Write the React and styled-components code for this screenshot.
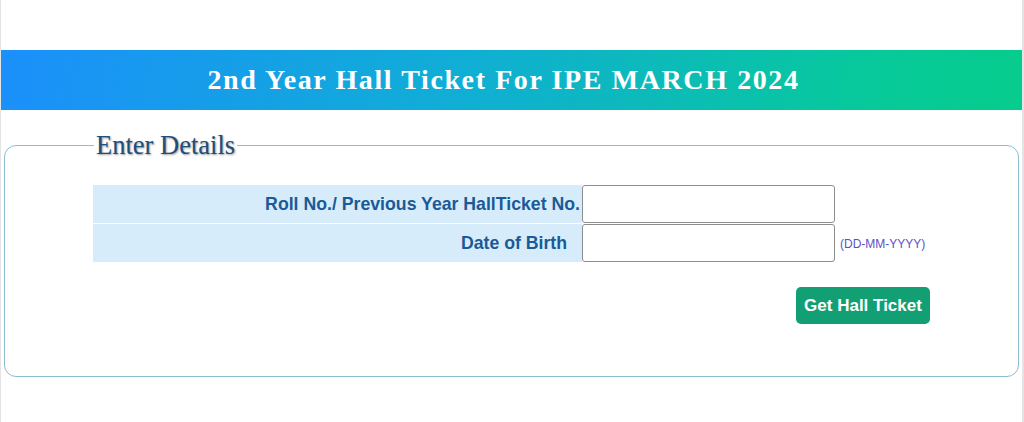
import React from "react";
import styled, { createGlobalStyle } from "styled-components";

const GlobalStyle = createGlobalStyle`
  body {
    margin: 0;
    background: #ffffff;
    font-family: "Liberation Sans", Arial, sans-serif;
  }
`;

const Page = styled.div`
  box-sizing: border-box;
  width: 1024px;
  min-height: 422px;
  padding-top: 50px;
  border-left: 1px solid #e4e4e4;
  border-right: 2px solid #e4e4e4;
`;

const Banner = styled.div`
  height: 60px;
  display: flex;
  align-items: center;
  justify-content: center;
  background: linear-gradient(100deg, #1b8ffb 0%, #10aed5 45%, #07c99a 85%, #06cc8c 100%);

  h1 {
    margin: 0;
    color: #ffffff;
    font-family: "Liberation Serif", "Times New Roman", serif;
    font-size: 28px;
    font-weight: bold;
    letter-spacing: 1.6px;
    transform: translateX(-8px);
  }
`;

const Fieldset = styled.fieldset`
  margin: 20px 3px 0 3px;
  padding: 25px 0 52px 0;
  border: 1px solid #8ebdd0;
  border-radius: 12px;

  legend {
    margin-left: 89px;
    padding: 0 2px;
    color: #1d4f7c;
    font-family: "Liberation Serif", "Times New Roman", serif;
    font-size: 26.5px;
    line-height: 30px;
    text-shadow: 1px 1px 2px #9a9a9a;
  }
`;

const FormTable = styled.div`
  width: 837px;
  margin: 0 auto;
  display: grid;
  grid-template-columns: 489px 253px 1fr;
  grid-template-rows: 38px 38px;
  row-gap: 1px;
`;

const Label = styled.div`
  display: flex;
  align-items: center;
  justify-content: flex-end;
  padding-right: ${(p) => p.$pad || 2}px;
  background: #d6ecfa;
  color: #1b5a98;
  font-size: 17.7px;
  font-weight: bold;
`;

const Input = styled.input`
  box-sizing: border-box;
  width: 253px;
  height: 38px;
  margin: 0;
  border: 1px solid #8d8d8d;
  border-radius: 3px;
  background: #fff;
`;

const Hint = styled.div`
  display: flex;
  align-items: center;
  padding-left: 5px;
  padding-top: 2px;
  color: #5b4fc7;
  font-size: 12px;
`;

const Actions = styled.div`
  width: 837px;
  margin: 25px auto 0;
  display: flex;
  justify-content: flex-end;
`;

const Button = styled.button`
  width: 134px;
  height: 37px;
  border: none;
  border-radius: 5px;
  background: #139f74;
  color: #fff;
  font-family: "Liberation Sans", Arial, sans-serif;
  font-size: 17px;
  font-weight: bold;
`;

export default function App() {
  return (
    <>
      <GlobalStyle />
      <Page>
        <Banner>
          <h1>2nd Year Hall Ticket For IPE MARCH 2024</h1>
        </Banner>
        <Fieldset>
          <legend>Enter Details</legend>
          <FormTable>
            <Label>Roll No./ Previous Year HallTicket No.</Label>
            <Input type="text" />
            <div />
            <Label $pad={15}>Date of Birth</Label>
            <Input type="text" />
            <Hint>(DD-MM-YYYY)</Hint>
          </FormTable>
          <Actions>
            <Button>Get Hall Ticket</Button>
          </Actions>
        </Fieldset>
      </Page>
    </>
  );
}
